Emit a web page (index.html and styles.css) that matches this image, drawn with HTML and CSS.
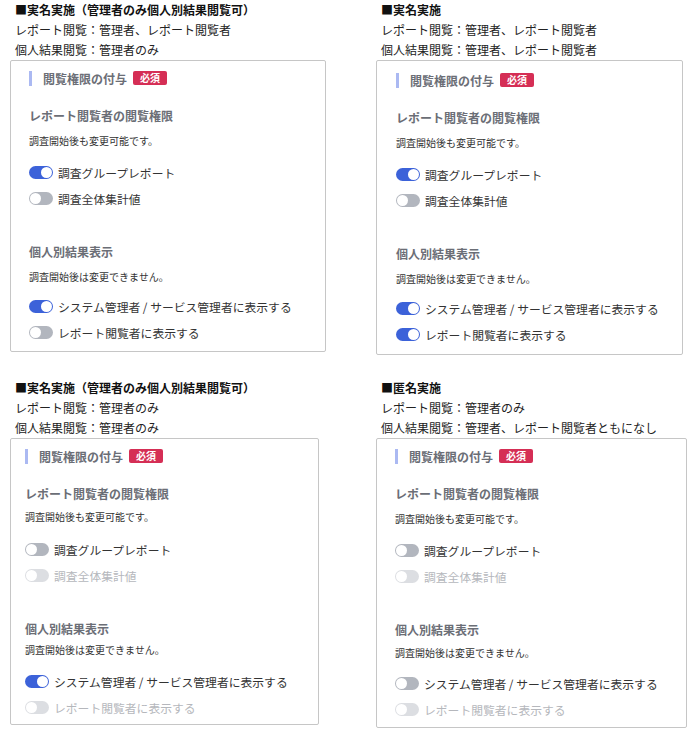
FILE: index.html
```html
<!DOCTYPE html>
<html lang="ja">
<head>
  <meta charset="UTF-8" />
  <title>閲覧権限パターン</title>
  <link rel="stylesheet" href="styles.css">
</head>
<body>
  <div class="cases">

    <div class="case case-a">
      <div class="case-head">
        <p class="case-name">■実名実施（管理者のみ個人別結果閲覧可）</p>
        <p>レポート閲覧：管理者、レポート閲覧者</p>
        <p>個人結果閲覧：管理者のみ</p>
      </div>
      <div class="perm-box">
        <div class="perm-title"><span class="bar"></span>閲覧権限の付与<span class="req-badge">必須</span></div>
        <h4 class="sec-title">レポート閲覧者の閲覧権限</h4>
        <p class="sec-note">調査開始後も変更可能です。</p>
        <ul class="toggles">
          <li><span class="toggle is-on"></span>調査グループレポート</li>
          <li><span class="toggle"></span>調査全体集計値</li>
        </ul>
        <h4 class="sec-title sec-gap">個人別結果表示</h4>
        <p class="sec-note note-fixed">調査開始後は変更できません。</p>
        <ul class="toggles toggles-fixed">
          <li><span class="toggle is-on"></span>システム管理者 / サービス管理者に表示する</li>
          <li><span class="toggle"></span>レポート閲覧者に表示する</li>
        </ul>
      </div>
    </div>

    <div class="case case-b">
      <div class="case-head">
        <p class="case-name">■実名実施</p>
        <p>レポート閲覧：管理者、レポート閲覧者</p>
        <p>個人結果閲覧：管理者、レポート閲覧者</p>
      </div>
      <div class="perm-box">
        <div class="perm-title"><span class="bar"></span>閲覧権限の付与<span class="req-badge">必須</span></div>
        <h4 class="sec-title">レポート閲覧者の閲覧権限</h4>
        <p class="sec-note">調査開始後も変更可能です。</p>
        <ul class="toggles">
          <li><span class="toggle is-on"></span>調査グループレポート</li>
          <li><span class="toggle"></span>調査全体集計値</li>
        </ul>
        <h4 class="sec-title sec-gap">個人別結果表示</h4>
        <p class="sec-note note-fixed">調査開始後は変更できません。</p>
        <ul class="toggles toggles-fixed">
          <li><span class="toggle is-on"></span>システム管理者 / サービス管理者に表示する</li>
          <li><span class="toggle is-on"></span>レポート閲覧者に表示する</li>
        </ul>
      </div>
    </div>

    <div class="case case-c">
      <div class="case-head">
        <p class="case-name">■実名実施（管理者のみ個人別結果閲覧可）</p>
        <p>レポート閲覧：管理者のみ</p>
        <p>個人結果閲覧：管理者のみ</p>
      </div>
      <div class="perm-box">
        <div class="perm-title"><span class="bar"></span>閲覧権限の付与<span class="req-badge">必須</span></div>
        <h4 class="sec-title">レポート閲覧者の閲覧権限</h4>
        <p class="sec-note">調査開始後も変更可能です。</p>
        <ul class="toggles">
          <li><span class="toggle"></span>調査グループレポート</li>
          <li class="is-disabled"><span class="toggle"></span>調査全体集計値</li>
        </ul>
        <h4 class="sec-title sec-gap">個人別結果表示</h4>
        <p class="sec-note note-fixed">調査開始後は変更できません。</p>
        <ul class="toggles toggles-fixed">
          <li><span class="toggle is-on"></span>システム管理者 / サービス管理者に表示する</li>
          <li class="is-disabled"><span class="toggle"></span>レポート閲覧者に表示する</li>
        </ul>
      </div>
    </div>

    <div class="case case-d">
      <div class="case-head">
        <p class="case-name">■匿名実施</p>
        <p>レポート閲覧：管理者のみ</p>
        <p>個人結果閲覧：管理者、レポート閲覧者ともになし</p>
      </div>
      <div class="perm-box">
        <div class="perm-title"><span class="bar"></span>閲覧権限の付与<span class="req-badge">必須</span></div>
        <h4 class="sec-title">レポート閲覧者の閲覧権限</h4>
        <p class="sec-note">調査開始後も変更可能です。</p>
        <ul class="toggles">
          <li><span class="toggle"></span>調査グループレポート</li>
          <li class="is-disabled"><span class="toggle"></span>調査全体集計値</li>
        </ul>
        <h4 class="sec-title sec-gap">個人別結果表示</h4>
        <p class="sec-note note-fixed">調査開始後は変更できません。</p>
        <ul class="toggles toggles-fixed">
          <li><span class="toggle"></span>システム管理者 / サービス管理者に表示する</li>
          <li class="is-disabled"><span class="toggle"></span>レポート閲覧者に表示する</li>
        </ul>
      </div>
    </div>

  </div>
</body>
</html>
```

FILE: styles.css
```css
* {
  box-sizing: border-box;
}

body {
  margin: 0;
  background: #fff;
  font-family: 'Noto Sans CJK JP', 'Noto Sans', sans-serif;
  color: #222;
}

p, h4, ul {
  margin: 0;
  padding: 0;
}

.cases {
  display: grid;
  grid-template-columns: 316px 312px;
  column-gap: 50px;
  row-gap: 23px;
  padding-left: 10px;
  align-items: start;
}

.case-head {
  padding-left: 5px;
  font-size: 12px;
  line-height: 20px;
}

.case-name {
  font-weight: bold;
  color: #111;
}

.perm-box {
  border: 1px solid #c6c6c6;
  border-radius: 2px;
  padding: 8px 0 6px 18px;
}

.case-b .perm-box {
  width: 307px;
  padding: 10px 0 7px 19px;
}

.case-c .perm-box {
  width: 309px;
  padding: 8px 0 4px 14px;
}

.case-d .perm-box {
  width: 311px;
  padding: 8px 0 5px 18px;
}

.perm-title {
  display: flex;
  align-items: center;
  height: 18px;
  font-size: 12px;
  font-weight: bold;
  color: #6b6e76;
}

.perm-title .bar {
  width: 3px;
  height: 15px;
  background: #abb9f2;
  margin-right: 11px;
}

.req-badge {
  margin-left: 6px;
  background: #d52e55;
  color: #fff;
  font-size: 10px;
  line-height: 14px;
  padding: 0 7px;
  border-radius: 2px;
}

.sec-title {
  margin-top: 20px;
  font-size: 12px;
  line-height: 18px;
  font-weight: bold;
  color: #6b6e76;
}

.sec-title.sec-gap {
  margin-top: 32px;
}

.sec-note {
  margin-top: 8px;
  font-size: 10px;
  line-height: 16px;
  color: #333;
}

.toggles {
  list-style: none;
  margin-top: 10px;
}

.toggles.toggles-fixed {
  margin-top: 8px;
}

.case-c .sec-note {
  margin-top: 6px;
}

.case-c .toggles {
  margin-top: 11px;
}

.case-c .sec-note.note-fixed {
  margin-top: 4px;
}

.case-c .toggles.toggles-fixed {
  margin-top: 10px;
}

.case-d .sec-note.note-fixed {
  margin-top: 6px;
}

.case-d .toggles.toggles-fixed {
  margin-top: 9px;
}

.toggles li {
  display: flex;
  align-items: center;
  height: 26px;
  font-size: 11.8px;
  color: #333;
}

.toggle {
  position: relative;
  width: 24px;
  height: 13px;
  border-radius: 7px;
  background: #b2b6be;
  margin-right: 5px;
  flex-shrink: 0;
}

.toggle::after {
  content: '';
  position: absolute;
  top: 1px;
  left: 1px;
  width: 11px;
  height: 11px;
  border-radius: 50%;
  background: #fff;
}

.toggle.is-on {
  background: #3c62d9;
}

.toggle.is-on::after {
  left: 12px;
}

.toggles li.is-disabled {
  color: #b5b7bc;
}

.is-disabled .toggle {
  background: #dcdee2;
}
```
